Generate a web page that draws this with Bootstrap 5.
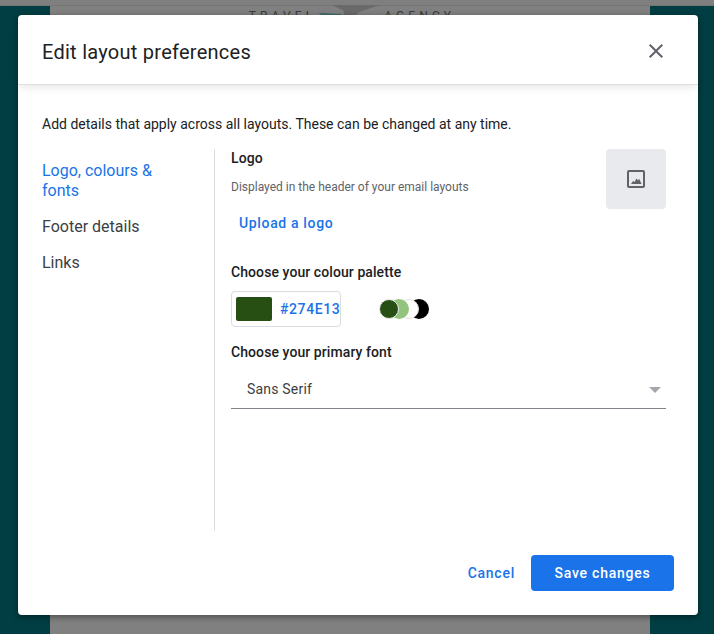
<!DOCTYPE html>
<html lang="en">
<head>
<meta charset="utf-8">
<title>Edit layout preferences</title>
<link href="https://cdn.jsdelivr.net/npm/bootstrap@5.3.0/dist/css/bootstrap.min.css" rel="stylesheet">
<style>
html,body{height:100%;margin:0}
body{width:714px;height:634px;overflow:hidden;background:#013e43;font-family:Roboto,"Liberation Sans",sans-serif;color:#202124;position:relative}
.bg-topbar{height:6px;background:#7f7f7f;border-bottom:1px solid #757575}
.bg-sheet{position:absolute;left:50px;top:6px;width:600px;height:628px;background:#808080;font-size:12px;letter-spacing:4.1px;color:#3c3c3c;line-height:16px;padding:2px 0 0 4px}
.bg-word{flex:none}
.bg-plane{flex:none;margin:-3px 4px 0 3px}
.pref-dialog{position:absolute;left:18px;top:15px;width:680px;height:600px;background:#fff;border-radius:4px;box-shadow:0 2px 6px rgba(0,0,0,.4);display:flex;flex-direction:column}
.pref-head{height:70px;flex:none;padding:0 24px;border-bottom:1px solid #e0e0e0;box-shadow:0 4px 8px -2px rgba(60,64,67,.14)}
.pref-title{font-size:20px;font-weight:400;letter-spacing:.26px;margin:4px 0 0;color:#202124;line-height:24px}
.pref-close{background:none;border:0;padding:0;width:24px;height:24px;margin:2px 6px 0 0;color:#5f6368;display:flex}
.pref-body{flex:1;padding:29px 24px 0;min-height:0}
.pref-intro{font-size:14px;line-height:20px;margin:0 0 15px}
.pref-cols{height:382px}
.pref-nav{width:173px;flex:none;border-right:1px solid #dadce0;padding-top:12px}
.pref-nav a{display:block;font-size:16px;line-height:20px;color:#3c4043;text-decoration:none;margin-bottom:16px;width:124px}
.pref-nav a.on{color:#1a73e8;width:124px}
.pref-main{flex:1;padding:0 8px 0 16px;min-width:0}
.pref-h{font-size:14px;font-weight:500;letter-spacing:.08px;line-height:18px;margin:0;color:#202124}
.pref-sub{font-size:12px;line-height:16px;margin:12px 0 0;color:#5f6368}
.pref-upload{display:block;font-size:14px;font-weight:500;letter-spacing:.65px;line-height:20px;color:#1a73e8;text-decoration:none;margin:18px 0 0 8px}
.pref-imgbox{width:60px;height:60px;background:#e8eaed;border-radius:4px;color:#5f6368}
.pref-h-pal{margin-top:30px}
.pal-row{margin-top:10px}
.pal-box{width:110px;height:36px;border:1px solid #dadce0;border-radius:4px;padding:0 4px;gap:8px}
.pal-swatch{width:36px;height:24px;flex:none;background:#274e13;border-radius:2px}
.pal-hex{font-size:14px;font-weight:500;color:#1a73e8;letter-spacing:.6px}
.pal-dots{margin-left:38px;width:60px}
.pal-dot{width:20px;height:20px;border-radius:50%;margin-right:-10px;flex:none}
.d1{background:#274e13;z-index:4;border:1px solid #e8eaed}.d2{background:#93c47d;z-index:3}.d3{background:#fff;z-index:2;border:1px solid #e0e0e0}.d4{background:#000;z-index:1}
.pref-h-font{margin-top:16px}
.font-pick{height:38px;margin-top:10px;border-bottom:1px solid #80868b;padding:0 5px 0 16px;font-size:14px;letter-spacing:.2px;color:#3c4043}
.font-caret{width:0;height:0;border-left:6.500px solid transparent;border-right:6.500px solid transparent;border-top:6.500px solid #a4a7ab}
.pref-foot{height:84px;flex:none;padding:0 24px 24px 0;gap:16px}
.pref-cancel{font-size:14px;font-weight:500;letter-spacing:.75px;color:#1a73e8;text-decoration:none;line-height:36px}
.pref-save{width:143px;height:36px;background:#1a73e8;border:0;border-radius:4px;color:#fff;font-size:14px;font-weight:500;letter-spacing:.75px;padding:0}
</style>
</head>
<body>
<div class="bg-topbar"></div>
<div class="bg-sheet d-flex justify-content-center align-items-start">
  <span class="bg-word">TRAVEL</span>
  <svg class="bg-plane" width="61" height="14" viewBox="0 0 61 14"><path d="M13 0 L61 0 L40 7 L33 14 L24 14 L25 6 Z" fill="#6a6a6a"/><path d="M0 8 L22 9 L24 14 L6 14Z" fill="#3f6a6d"/></svg>
  <span class="bg-word">AGENCY</span>
</div>

<div class="pref-dialog" role="dialog">
  <div class="pref-head d-flex align-items-center justify-content-between">
    <h5 class="pref-title">Edit layout preferences</h5>
    <button class="pref-close" type="button" aria-label="Close">
      <svg width="24" height="24" viewBox="0 0 24 24"><path fill="currentColor" d="M19 6.410 17.590 5 12 10.590 6.410 5 5 6.410 10.590 12 5 17.590 6.410 19 12 13.410 17.590 19 19 17.590 13.410 12z"/></svg>
    </button>
  </div>
  <div class="pref-body">
    <p class="pref-intro">Add details that apply across all layouts. These can be changed at any time.</p>
    <div class="pref-cols d-flex">
      <nav class="pref-nav">
        <a class="on" href="#">Logo, colours &amp; fonts</a>
        <a href="#">Footer details</a>
        <a href="#">Links</a>
      </nav>
      <div class="pref-main">
        <div class="d-flex justify-content-between align-items-start">
          <div>
            <h6 class="pref-h">Logo</h6>
            <p class="pref-sub">Displayed in the header of your email layouts</p>
            <a class="pref-upload" href="#">Upload a logo</a>
          </div>
          <div class="pref-imgbox d-flex align-items-center justify-content-center">
            <svg width="24" height="24" viewBox="0 0 24 24"><path fill="currentColor" fill-rule="evenodd" d="M5 3h14c1.100 0 2 .9 2 2v14c0 1.100-.9 2-2 2H5c-1.100 0-2-.9-2-2V5c0-1.100.9-2 2-2zm0 2v14h14V5H5z"/><path fill="currentColor" d="M7 17l2-3 1.500 1 2-3.500 1.500 2 1.200-1.800L17.500 17z"/></svg>
          </div>
        </div>
        <h6 class="pref-h pref-h-pal">Choose your colour palette</h6>
        <div class="pal-row d-flex align-items-center">
          <div class="pal-box d-flex align-items-center">
            <span class="pal-swatch"></span>
            <span class="pal-hex">#274E13</span>
          </div>
          <div class="pal-dots d-flex">
            <span class="pal-dot d1"></span><span class="pal-dot d2"></span><span class="pal-dot d3"></span><span class="pal-dot d4"></span>
          </div>
        </div>
        <h6 class="pref-h pref-h-font">Choose your primary font</h6>
        <div class="font-pick d-flex align-items-center justify-content-between">
          <span>Sans Serif</span><span class="font-caret"></span>
        </div>
      </div>
    </div>
  </div>
  <div class="pref-foot d-flex align-items-end justify-content-end">
    <a class="pref-cancel" href="#">Cancel</a>
    <button class="pref-save" type="button">Save changes</button>
  </div>
</div>
</body>
</html>
